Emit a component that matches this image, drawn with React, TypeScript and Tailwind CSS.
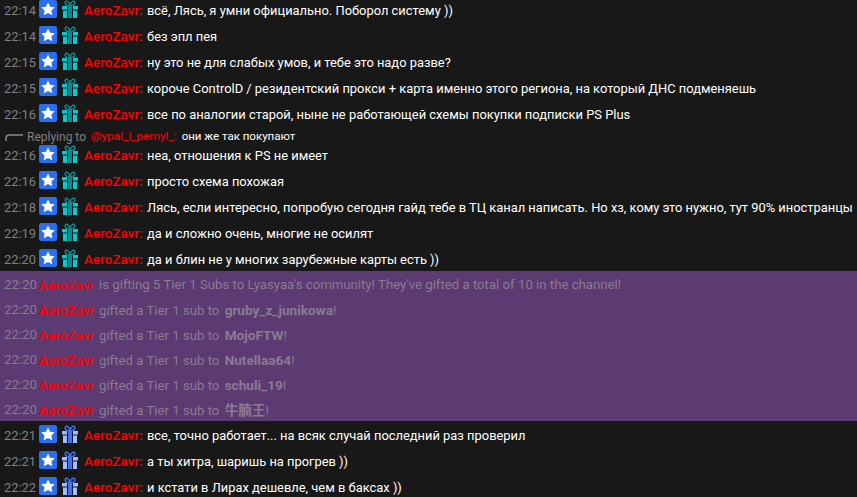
import React from 'react';

const FONT = "font-['Roboto','Noto_Sans_CJK_SC',sans-serif]";

interface ChatLine {
  time: string;
  text: string;
  reply?: { to: string; text: string };
}

const TOP_LINES: ChatLine[] = [
  { time: '22:14', text: 'всё, Лясь, я умни официально. Поборол систему ))' },
  { time: '22:14', text: 'без эпл пея' },
  { time: '22:15', text: 'ну это не для слабых умов, и тебе это надо разве?' },
  { time: '22:15', text: 'короче ControlD / резидентский прокси + карта именно этого региона, на который ДНС подменяешь' },
  { time: '22:16', text: 'все по аналогии старой, ныне не работающей схемы покупки подписки PS Plus' },
  { time: '22:16', text: 'неа, отношения к PS не имеет', reply: { to: '@ypal_i_pernyl_:', text: 'они же так покупают' } },
  { time: '22:16', text: 'просто схема похожая' },
  { time: '22:18', text: 'Лясь, если интересно, попробую сегодня гайд тебе в ТЦ канал написать. Но хз, кому это нужно, тут 90% иностранцы' },
  { time: '22:19', text: 'да и сложно очень, многие не осилят' },
  { time: '22:20', text: 'да и блин не у многих зарубежные карты есть ))' },
];

const GIFT_NAMES = ['gruby_z_junikowa', 'MojoFTW', 'Nutellaa64', 'schuli_19', '牛腩王'];

const BOTTOM_LINES: ChatLine[] = [
  { time: '22:21', text: 'все, точно работает... на всяк случай последний раз проверил' },
  { time: '22:21', text: 'а ты хитра, шаришь на прогрев ))' },
  { time: '22:22', text: 'и кстати в Лирах дешевле, чем в баксах ))' },
];

const StarBadge = () => (
  <svg width="18" height="18" viewBox="0 0 18 18" className="shrink-0">
    <rect width="18" height="18" rx="2" fill="#2a6ff0" />
    <path d="M9 2.4l2.1 4.3 4.7.6-3.4 3.3.9 4.7L9 13.1l-4.3 2.2.9-4.7-3.4-3.3 4.7-.6z" fill="#fff" />
  </svg>
);

const GiftBadge = ({ light, dark }: { light: string; dark: string }) => (
  <svg width="16" height="18" viewBox="0 0 16 18" className="shrink-0">
    <path d="M8 6C5.5 6 2.6 4.8 3.2 2.4 3.8.2 7 .6 8 6c1-5.4 4.2-5.8 4.8-3.6C13.4 4.8 10.5 6 8 6z" fill="none" stroke={dark} strokeWidth="1.5" />
    <rect x="0" y="6" width="16" height="3.5" fill={light} />
    <rect x="1" y="10.5" width="14" height="7.5" fill={light} />
    <rect x="5" y="6" width="1" height="12" fill="#181818" />
    <rect x="10" y="6" width="1" height="12" fill="#181818" />
    <rect x="6" y="6" width="4" height="12" fill={dark} />
  </svg>
);

const MessageRow = ({ line, blue }: { line: ChatLine; blue?: boolean }) => (
  <>
    {line.reply && (
      <div className="flex h-[15px] items-center pt-[6px] pl-[5px] text-[12px] whitespace-nowrap">
        <svg width="18" height="8" viewBox="0 0 18 8" className="mr-[4px] shrink-0">
          <path d="M1 8V5.5C1 3.5 2.5 2 4.5 2H18" fill="none" stroke="#8a8a8a" strokeWidth="1.5" />
        </svg>
        <span className="text-[#808080]">Replying to</span>
        <span className="ml-[5px] text-[11.8px] text-[#ff0000]">{line.reply.to}</span>
        <span className="ml-[5px] text-[11.5px] text-white">{line.reply.text}</span>
      </div>
    )}
    <div className="flex h-[26px] items-center pl-[4px] text-[12.9px] whitespace-nowrap">
      <span className="mt-[3px] w-[35px] shrink-0 text-[#808080]">{line.time}</span>
      <StarBadge />
      <span className="ml-[5px] flex">
        {blue ? <GiftBadge light="#a3bcff" dark="#3d73f0" /> : <GiftBadge light="#0cc8cc" dark="#0a8a8e" />}
      </span>
      <span className="mt-[3px] ml-[6px] w-[63px] shrink-0 text-[13.5px] font-medium text-[#ff0000]">AeroZavr:</span>
      <span className="mt-[3px] text-white">{line.text}</span>
    </div>
  </>
);

const GiftRow = ({ children }: { children: React.ReactNode }) => (
  <div className="flex h-[25px] items-center pt-[3px] pl-[4px] text-[13.2px] whitespace-nowrap text-[#8a7a93]">
    <span className="w-[35px] shrink-0">22:20</span>
    <span className="w-[60px] shrink-0 text-[13.5px] font-medium text-[#ff0000]">AeroZavr</span>
    <span>{children}</span>
  </div>
);

export default function App() {
  return (
    <div className={`h-[497px] w-[857px] overflow-hidden bg-[#181818] ${FONT}`}>
      <div className="-mt-[4px]">
        {TOP_LINES.map((line, i) => (
          <MessageRow key={i} line={line} />
        ))}
        <div className="bg-[#5c3a72]">
          <GiftRow>is gifting 5 Tier 1 Subs to Lyasyaa's community! They've gifted a total of 10 in the channel!</GiftRow>
          {GIFT_NAMES.map((name) => (
            <GiftRow key={name}>
              gifted a Tier 1 sub to <b className="ml-[2px] text-[13.6px]">{name}</b>!
            </GiftRow>
          ))}
        </div>
        {BOTTOM_LINES.map((line, i) => (
          <MessageRow key={i} line={line} blue />
        ))}
      </div>
    </div>
  );
}
